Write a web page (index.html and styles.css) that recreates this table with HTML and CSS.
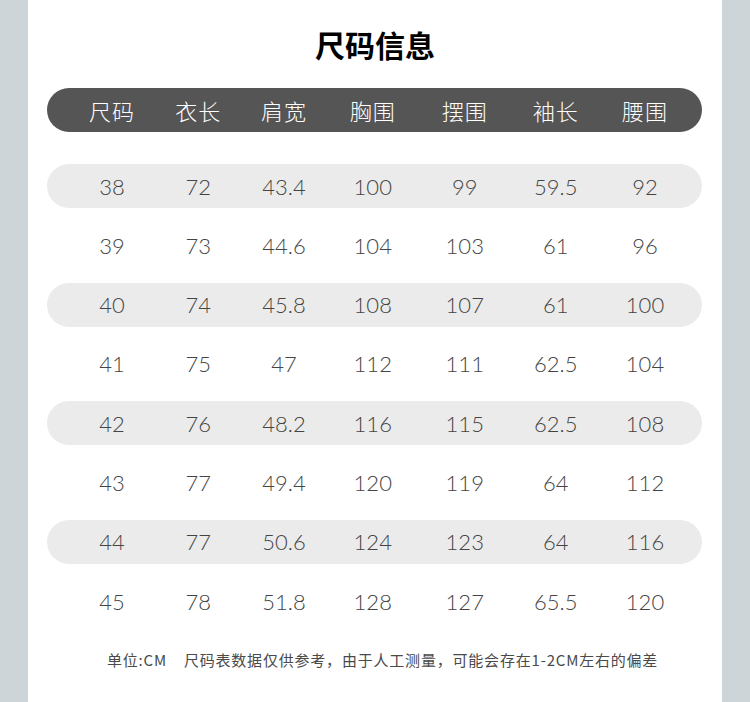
FILE: index.html
```html
<!DOCTYPE html>
<html lang="zh">
<head>
<meta charset="utf-8">
<title>尺码信息</title>
<link rel="stylesheet" href="styles.css">
</head>
<body>
<div class="page">
  <div class="side"></div>
  <main class="panel">
    <h1 class="title">尺码信息</h1>
    <div class="row head">
      <span>尺码</span><span>衣长</span><span>肩宽</span><span>胸围</span><span>摆围</span><span>袖长</span><span>腰围</span>
    </div>
    <div class="rows">
      <div class="row stripe"><span>38</span><span>72</span><span>43.4</span><span>100</span><span>99</span><span>59.5</span><span>92</span></div>
      <div class="row"><span>39</span><span>73</span><span>44.6</span><span>104</span><span>103</span><span>61</span><span>96</span></div>
      <div class="row stripe"><span>40</span><span>74</span><span>45.8</span><span>108</span><span>107</span><span>61</span><span>100</span></div>
      <div class="row"><span>41</span><span>75</span><span>47</span><span>112</span><span>111</span><span>62.5</span><span>104</span></div>
      <div class="row stripe"><span>42</span><span>76</span><span>48.2</span><span>116</span><span>115</span><span>62.5</span><span>108</span></div>
      <div class="row"><span>43</span><span>77</span><span>49.4</span><span>120</span><span>119</span><span>64</span><span>112</span></div>
      <div class="row stripe"><span>44</span><span>77</span><span>50.6</span><span>124</span><span>123</span><span>64</span><span>116</span></div>
      <div class="row"><span>45</span><span>78</span><span>51.8</span><span>128</span><span>127</span><span>65.5</span><span>120</span></div>
    </div>
    <p class="note"><span class="unit">单位:CM</span><span>尺码表数据仅供参考，由于人工测量，可能会存在1-2CM左右的偏差</span></p>
  </main>
  <div class="side"></div>
</div>
</body>
</html>
```
FILE: styles.css
```css
html, body {
  margin: 0;
  padding: 0;
  background: #ffffff;
}
.page {
  display: flex;
  width: 750px;
  height: 702px;
  overflow: hidden;
}
.side {
  width: 28px;
  flex: none;
  background: #cdd5d9;
}
.panel {
  flex: 1;
  background: #ffffff;
  padding: 22px 20px 0 19px;
  font-family: "Noto Sans CJK SC", "Noto Sans", sans-serif;
}
.title {
  margin: 0;
  height: 44px;
  line-height: 44px;
  text-align: center;
  font-size: 30px;
  font-weight: 700;
  color: #000000;
  padding-left: 1px;
}
.row {
  display: grid;
  grid-template-columns: 87px 85.5px 86px 91.5px 92.5px 89.5px 89px;
  padding-left: 21.5px;
  height: 44px;
  align-items: center;
  border-radius: 22px;
  text-align: center;
  font-family: "Lato", "Noto Sans", sans-serif;
  font-weight: 300;
  font-size: 22px;
  color: #444444;
}
.row.head {
  margin-top: 22px;
  background: #555555;
  color: #ffffff;
  font-family: "Noto Sans CJK SC", sans-serif;
  font-weight: 300;
  font-size: 22px;
  letter-spacing: 1px;
}
.rows {
  margin-top: 32px;
  display: flex;
  flex-direction: column;
  gap: 15.3px;
}
.row.stripe {
  background: #ebebeb;
}
.note {
  margin: 25px 0 0 60px;
  line-height: 24px;
  font-size: 15px;
  letter-spacing: 0.8px;
  color: #4a4a4a;
  display: flex;
  gap: 17px;
}
```
